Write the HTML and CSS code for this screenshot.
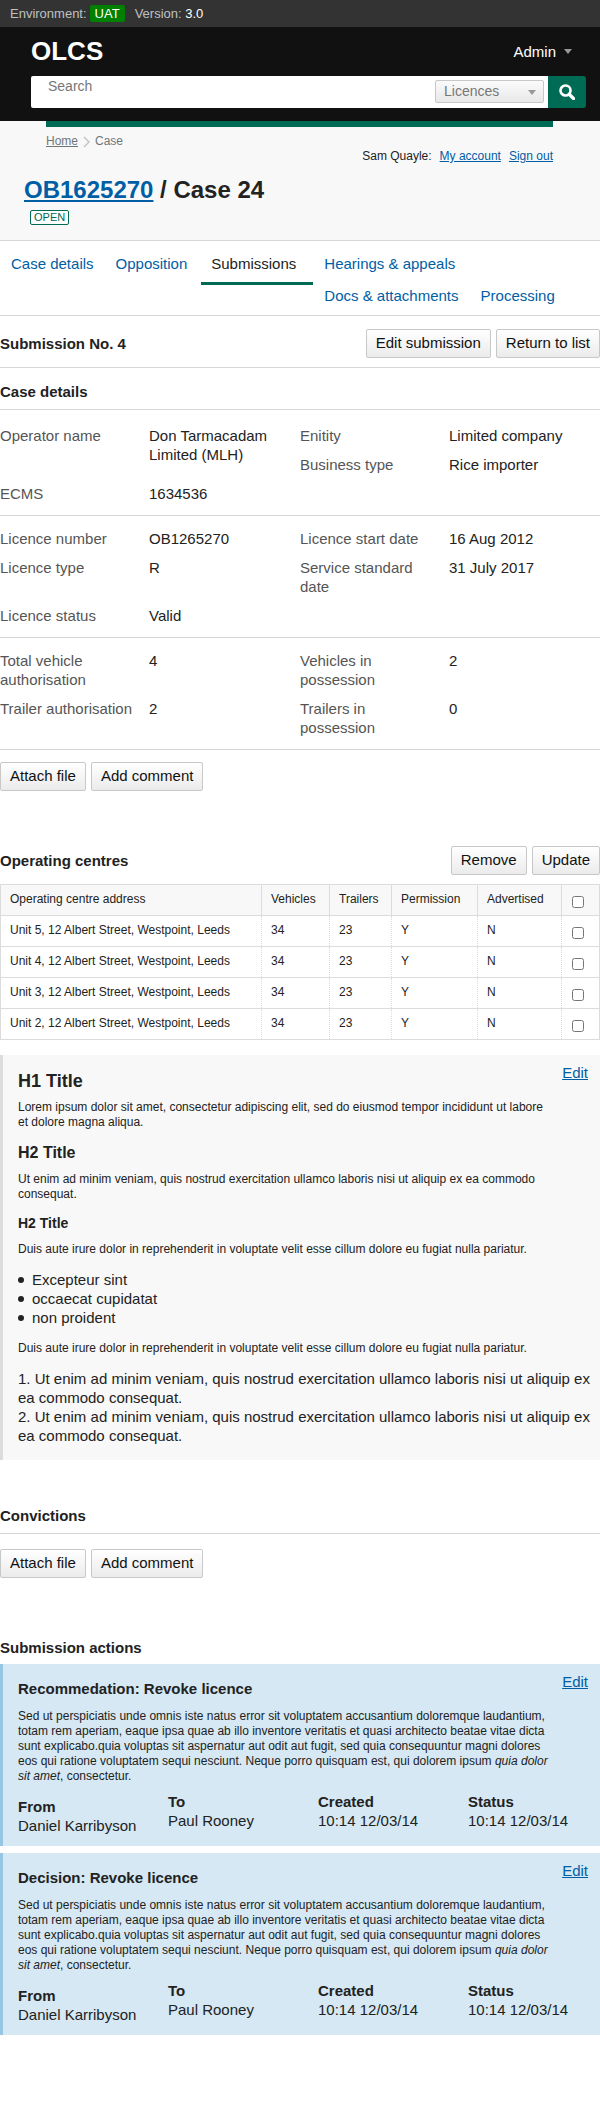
FILE: index.html
```html
<!DOCTYPE html>
<html lang="en">
<head>
<meta charset="utf-8">
<meta name="viewport" content="width=device-width, initial-scale=1">
<title>OLCS - Case 24</title>
<link rel="stylesheet" href="styles.css">
</head>
<body>
<div class="env">
  <span>Environment:</span><span class="env-tag">UAT</span><span class="env-version">Version: <b>3.0</b></span>
</div>
<header class="header">
  <div class="header-top">
    <div class="logo">OLCS</div>
    <button class="admin" type="button">Admin <span class="arrow"></span></button>
  </div>
  <form class="search">
    <input class="search-input" type="text" placeholder="Search" aria-label="Search">
    <div class="select-wrap">
      <select class="select" aria-label="Search in"><option>Licences</option></select>
      <span class="arrow select-arrow"></span>
    </div>
    <button class="search-button" type="button" aria-label="Search">
      <svg width="16" height="16" viewBox="0 0 16 16" fill="none" stroke="#fff"><circle cx="6.5" cy="6.5" r="5" stroke-width="2.6"/><path d="M10.2 10.2L14.6 14.6" stroke-width="3.4" stroke-linecap="round"/></svg>
    </button>
  </form>
</header>

<div class="page-header">
  <div class="rule"></div>
  <nav class="crumbs" aria-label="Breadcrumb">
    <a href="#">Home</a>
    <svg width="7" height="12" viewBox="0 0 7 12" fill="none" stroke="#bfc1c3" stroke-width="1.4"><path d="M1 1L6 6L1 11"/></svg>
    <span>Case</span>
  </nav>
  <div class="account"><span>Sam Quayle:</span><a href="#">My account</a><a href="#">Sign out</a></div>
  <h1 class="title"><a href="#">OB1625270</a> / Case 24</h1>
  <span class="status">OPEN</span>
</div>

<nav aria-label="Case">
  <ul class="tabs">
    <li><a href="#">Case details</a></li>
    <li><a href="#">Opposition</a></li>
    <li class="current"><a href="#">Submissions</a></li>
    <li><a href="#">Hearings &amp; appeals</a></li>
    <li><a href="#">Docs &amp; attachments</a></li>
    <li><a href="#">Processing</a></li>
  </ul>
</nav>

<main>
  <div class="bar">
    <h2 class="heading">Submission No. 4</h2>
    <div class="buttons"><button class="button" type="button">Edit submission</button><button class="button" type="button">Return to list</button></div>
  </div>

  <section class="case">
    <h3 class="heading lined">Case details</h3>
    <dl class="facts">
      <div class="tall"><dt>Operator name</dt><dd>Don Tarmacadam Limited (MLH)</dd></div>
      <div><dt>Enitity</dt><dd>Limited company</dd></div>
      <div><dt>Business type</dt><dd>Rice importer</dd></div>
      <div><dt>ECMS</dt><dd>1634536</dd></div>
    </dl>
    <dl class="facts">
      <div><dt>Licence number</dt><dd>OB1265270</dd></div>
      <div><dt>Licence start date</dt><dd>16 Aug 2012</dd></div>
      <div><dt>Licence type</dt><dd>R</dd></div>
      <div><dt>Service standard date</dt><dd>31 July 2017</dd></div>
      <div><dt>Licence status</dt><dd>Valid</dd></div>
    </dl>
    <dl class="facts">
      <div><dt>Total vehicle authorisation</dt><dd>4</dd></div>
      <div><dt>Vehicles in possession</dt><dd>2</dd></div>
      <div><dt>Trailer authorisation</dt><dd>2</dd></div>
      <div><dt>Trailers in possession</dt><dd>0</dd></div>
    </dl>
    <div class="buttons"><button class="button" type="button">Attach file</button><button class="button" type="button">Add comment</button></div>
  </section>

  <section class="centres">
    <div class="bar plain">
      <h3 class="heading">Operating centres</h3>
      <div class="buttons"><button class="button" type="button">Remove</button><button class="button" type="button">Update</button></div>
    </div>
    <table class="table">
      <colgroup><col class="w-address"><col class="w-vehicles"><col class="w-trailers"><col class="w-permission"><col class="w-advertised"><col></colgroup>
      <thead>
        <tr><th scope="col">Operating centre address</th><th scope="col">Vehicles</th><th scope="col">Trailers</th><th scope="col">Permission</th><th scope="col">Advertised</th><th scope="col"><input type="checkbox" aria-label="Select all"></th></tr>
      </thead>
      <tbody>
        <tr><td>Unit 5, 12 Albert Street, Westpoint, Leeds</td><td>34</td><td>23</td><td>Y</td><td>N</td><td><input type="checkbox" aria-label="Select Unit 5"></td></tr>
        <tr><td>Unit 4, 12 Albert Street, Westpoint, Leeds</td><td>34</td><td>23</td><td>Y</td><td>N</td><td><input type="checkbox" aria-label="Select Unit 4"></td></tr>
        <tr><td>Unit 3, 12 Albert Street, Westpoint, Leeds</td><td>34</td><td>23</td><td>Y</td><td>N</td><td><input type="checkbox" aria-label="Select Unit 3"></td></tr>
        <tr><td>Unit 2, 12 Albert Street, Westpoint, Leeds</td><td>34</td><td>23</td><td>Y</td><td>N</td><td><input type="checkbox" aria-label="Select Unit 2"></td></tr>
      </tbody>
    </table>
  </section>

  <section class="panel">
    <a class="edit" href="#">Edit</a>
    <h1 class="h-large">H1 Title</h1>
    <p>Lorem ipsum dolor sit amet, consectetur adipiscing elit, sed do eiusmod tempor incididunt ut labore et dolore magna aliqua.</p>
    <h2 class="h-medium">H2 Title</h2>
    <p>Ut enim ad minim veniam, quis nostrud exercitation ullamco laboris nisi ut aliquip ex ea commodo consequat.</p>
    <h3 class="h-small">H2 Title</h3>
    <p>Duis aute irure dolor in reprehenderit in voluptate velit esse cillum dolore eu fugiat nulla pariatur.</p>
    <ul class="bullets"><li>Excepteur sint</li><li>occaecat cupidatat</li><li>non proident</li></ul>
    <p>Duis aute irure dolor in reprehenderit in voluptate velit esse cillum dolore eu fugiat nulla pariatur.</p>
    <ol class="numbers">
      <li>Ut enim ad minim veniam, quis nostrud exercitation ullamco laboris nisi ut aliquip ex ea commodo consequat.</li>
      <li>Ut enim ad minim veniam, quis nostrud exercitation ullamco laboris nisi ut aliquip ex ea commodo consequat.</li>
    </ol>
  </section>

  <section class="convictions">
    <h3 class="heading lined">Convictions</h3>
    <div class="buttons"><button class="button" type="button">Attach file</button><button class="button" type="button">Add comment</button></div>
  </section>

  <section class="actions">
    <h3 class="heading">Submission actions</h3>
    <article class="panel action">
      <a class="edit" href="#">Edit</a>
      <h4 class="heading">Recommedation: Revoke licence</h4>
      <p>Sed ut perspiciatis unde omnis iste natus error sit voluptatem accusantium doloremque laudantium, totam rem aperiam, eaque ipsa quae ab illo inventore veritatis et quasi architecto beatae vitae dicta sunt explicabo.quia voluptas sit aspernatur aut odit aut fugit, sed quia consequuntur magni dolores eos qui ratione voluptatem sequi nesciunt. Neque porro quisquam est, qui dolorem ipsum <em>quia dolor sit amet</em>, consectetur.</p>
      <dl class="meta">
        <div><dt>From</dt><dd>Daniel Karribyson</dd></div>
        <div><dt>To</dt><dd>Paul Rooney</dd></div>
        <div><dt>Created</dt><dd>10:14 12/03/14</dd></div>
        <div><dt>Status</dt><dd>10:14 12/03/14</dd></div>
      </dl>
    </article>
    <article class="panel action">
      <a class="edit" href="#">Edit</a>
      <h4 class="heading">Decision: Revoke licence</h4>
      <p>Sed ut perspiciatis unde omnis iste natus error sit voluptatem accusantium doloremque laudantium, totam rem aperiam, eaque ipsa quae ab illo inventore veritatis et quasi architecto beatae vitae dicta sunt explicabo.quia voluptas sit aspernatur aut odit aut fugit, sed quia consequuntur magni dolores eos qui ratione voluptatem sequi nesciunt. Neque porro quisquam est, qui dolorem ipsum <em>quia dolor sit amet</em>, consectetur.</p>
      <dl class="meta">
        <div><dt>From</dt><dd>Daniel Karribyson</dd></div>
        <div><dt>To</dt><dd>Paul Rooney</dd></div>
        <div><dt>Created</dt><dd>10:14 12/03/14</dd></div>
        <div><dt>Status</dt><dd>10:14 12/03/14</dd></div>
      </dl>
    </article>
  </section>
</main>
</body>
</html>
```

FILE: styles.css
```css
* { box-sizing: border-box; }
body {
  margin: 0;
  background: #fff;
  color: #222;
  font: 15px/19px "Liberation Sans", Arial, sans-serif;
}
h1, h2, h3, h4, p, ul, ol, dl, dd { margin: 0; padding: 0; }
button, input, select { font: inherit; }
a { color: #005ea5; }

.env {
  display: flex;
  align-items: center;
  height: 27px;
  padding: 0 10px;
  background: #333;
  color: #bfc1c3;
  font-size: 13px;
}
.env-tag {
  margin: 0 10px 0 3px;
  padding: 0 5px;
  border-radius: 2px;
  background: #008000;
  color: #fff;
  line-height: 17px;
}
.env-version b { color: #fff; font-weight: normal; }

.header { padding: 9px 14px 13px 31px; background: #111; }
.header-top {
  display: flex;
  justify-content: space-between;
  align-items: center;
  height: 31px;
}
.logo { color: #fff; font-size: 26px; font-weight: bold; line-height: 31px; }
.admin {
  display: flex;
  align-items: center;
  gap: 8px;
  padding: 0;
  margin-right: 14px;
  border: 0;
  background: none;
  color: #fff;
}
.arrow {
  border: 4px solid transparent;
  border-top: 5px solid #999;
  border-bottom: 0;
}
.search { display: flex; height: 32px; margin-top: 9px; }
.search-input {
  flex: 1;
  min-width: 0;
  padding: 0 17px 11px;
  border: 0;
  border-radius: 2px 0 0 2px;
  background: #fff;
  color: #222;
  font-size: 14px;
}
.search-input::placeholder { color: #777; opacity: 1; }
.select-wrap { position: relative; padding: 4px; background: #fff; }
.select {
  width: 109px;
  height: 23px;
  padding: 0 8px;
  appearance: none;
  border: 1px solid #c8c8c8;
  border-radius: 2px;
  background: linear-gradient(#fbfbfb, #e8e8e8);
  color: #777;
  font-size: 14px;
}
.select-arrow { position: absolute; top: 14px; right: 12px; pointer-events: none; }
.search-button {
  display: flex;
  align-items: center;
  justify-content: center;
  width: 38px;
  padding: 0;
  border: 0;
  border-radius: 0 3px 3px 0;
  background: #006b54;
}

.page-header {
  padding-bottom: 15px;
  border-bottom: 1px solid #d8d8d8;
  background: #f8f8f8;
}
.rule { height: 6px; margin: 0 47px 0 46px; background: #006b54; }
.crumbs {
  display: flex;
  align-items: center;
  gap: 5px;
  margin: 7px 46px 0;
  color: #6f777b;
  font-size: 12px;
  line-height: 15px;
}
.crumbs a { color: #6f777b; }
.account {
  display: flex;
  justify-content: flex-end;
  gap: 8px;
  margin-right: 47px;
  font-size: 12px;
  line-height: 15px;
}
.title { margin: 11px 24px 0; font-size: 24px; line-height: 29px; }
.status {
  display: block;
  width: fit-content;
  margin: 6px 30px 0;
  padding: 0 3px;
  border: 1px solid #006b54;
  border-radius: 2px;
  background: #fff;
  color: #006b54;
  font-size: 11px;
  line-height: 13px;
}

.tabs {
  overflow: hidden;
  padding: 0 0 10px;
  border-bottom: 1px solid #d8d8d8;
  list-style: none;
}
.tabs li { float: left; padding: 13px 11px 0; }
.tabs a { text-decoration: none; }
.tabs .current {
  margin-left: 3px;
  padding: 13px 17px 9px 10px;
  border-bottom: 3px solid #006b54;
}
.current a { color: #222; }

.heading { font-size: 15px; line-height: 19px; }
.lined { padding-bottom: 8px; border-bottom: 1px solid #d8d8d8; }
.bar {
  display: flex;
  justify-content: space-between;
  align-items: center;
  padding: 13px 0 9px;
  border-bottom: 1px solid #d8d8d8;
}
.plain { padding: 0 0 9px; border: 0; }
.buttons { display: flex; gap: 5px; }
.button {
  height: 29px;
  padding: 0 9px 3px;
  border: 1px solid #c8c8c8;
  border-radius: 2px;
  background: linear-gradient(#fff, #ebebeb);
  color: #111;
}

.case { padding-top: 14px; }
.case .lined { margin-bottom: 3px; }
.facts {
  display: grid;
  grid-template-columns: 1fr 1fr;
  padding: 13px 0 2px;
  border-bottom: 1px solid #d8d8d8;
}
.facts > div { display: grid; grid-template-columns: 149fr 151fr; padding-bottom: 10px; }
.facts .tall { grid-row: span 2; }
.facts dt { padding-right: 10px; color: #555; }
.case .buttons { margin-top: 12px; }

.centres { margin-top: 55px; }
.table {
  width: 100%;
  table-layout: fixed;
  border-collapse: collapse;
  border: 1px solid #dcdcdc;
  font-size: 12px;
  line-height: 15px;
}
.w-address { width: 261px; }
.w-vehicles { width: 68px; }
.w-trailers { width: 62px; }
.w-permission { width: 86px; }
.w-advertised { width: 84px; }
.table th, .table td {
  height: 31px;
  padding: 7px 9px 8px;
  border: 1px solid #dcdcdc;
  text-align: left;
  font-weight: normal;
  vertical-align: top;
}
.table td { border-left-style: dotted; border-right-style: dotted; }
.table td:first-child { border-left-style: solid; }
.table td:last-child { border-right-style: solid; }
.table th { background: #f8f8f8; }
.table th:last-child, .table td:last-child { padding: 11px 10px 0; }
.table input { display: block; width: 12px; height: 12px; margin: 0; }

.panel {
  position: relative;
  margin-top: 15px;
  padding: 15px 5px 18px 15px;
  border-left: 3px solid #dcdcdc;
  background: #f8f8f8;
}
.edit { position: absolute; top: 8px; right: 12px; }
.panel p { padding-right: 40px; font-size: 12px; line-height: 15px; }
.h-large { margin-bottom: 8px; font-size: 18px; line-height: 22px; }
.h-medium { margin: 13px 0 9px; font-size: 16px; line-height: 20px; }
.h-small { margin: 12px 0 9px; font-size: 14px; line-height: 19px; }
.bullets { margin: 13px 0 14px; list-style: none; }
.bullets li { display: flex; align-items: center; gap: 8px; }
.bullets li::before {
  content: "";
  width: 6px;
  height: 6px;
  border-radius: 50%;
  background: #222;
}
.numbers { margin-top: 13px; margin-bottom: -3px; list-style-position: inside; }

.convictions { margin-top: 46px; }
.convictions .buttons { margin-top: 15px; }
.actions { padding: 60px 0 67px; }
.action {
  margin-top: 7px;
  padding: 15px 5px 11px 15px;
  border-color: #96c6e2;
  background: #d5e8f3;
}
.action .heading { margin-bottom: 11px; }
.meta {
  display: grid;
  grid-template-columns: repeat(4, 150px);
  margin: 8px -20px 0 0;
}
.meta dt { font-weight: bold; }
.meta div:first-child { padding-top: 5px; }
```
